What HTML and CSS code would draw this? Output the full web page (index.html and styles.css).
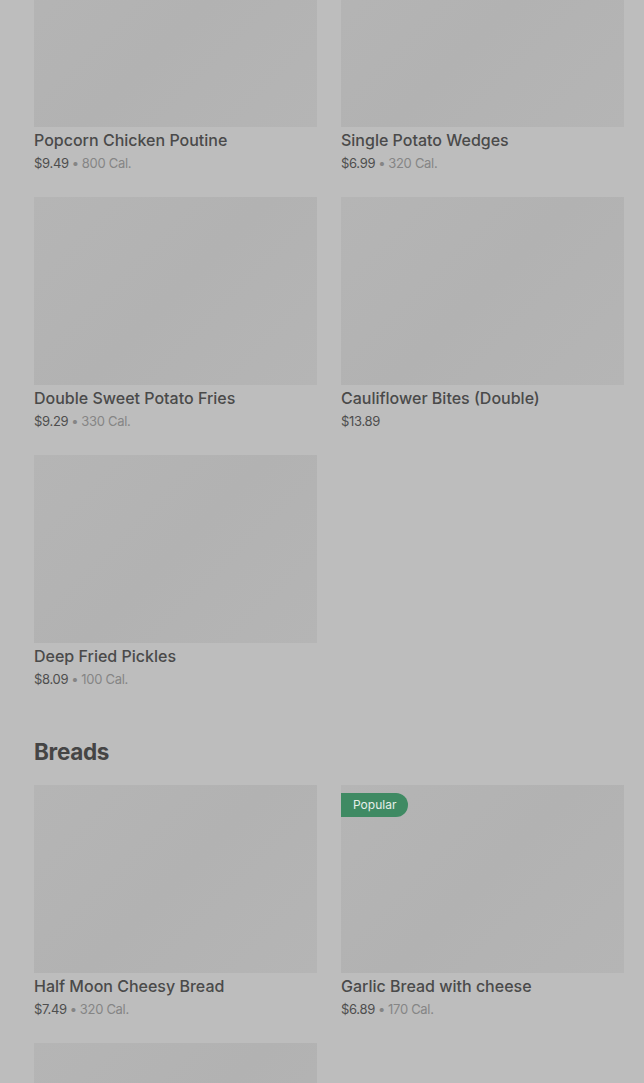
FILE: index.html
```html
<!DOCTYPE html>
<html lang="en">
<head>
    <meta charset="UTF-8">
    <meta name="viewport" content="width=device-width, initial-scale=1.0">
    <title>Menu</title>
    <link rel="stylesheet" href="styles.css">
</head>
<body>
    <div class="menu">
        <!-- sides -->
        <section class="section first">
            <div class="grid">
                <div class="item">
                    <div class="photo"></div>
                    <div class="name">Popcorn Chicken Poutine</div>
                    <div class="meta">$9.49<span class="dot">•</span><span class="cal">800 Cal.</span></div>
                </div>
                <div class="item">
                    <div class="photo"></div>
                    <div class="name">Single Potato Wedges</div>
                    <div class="meta">$6.99<span class="dot">•</span><span class="cal">320 Cal.</span></div>
                </div>
                <div class="item">
                    <div class="photo"></div>
                    <div class="name">Double Sweet Potato Fries</div>
                    <div class="meta">$9.29<span class="dot">•</span><span class="cal">330 Cal.</span></div>
                </div>
                <div class="item">
                    <div class="photo"></div>
                    <div class="name">Cauliflower Bites (Double)</div>
                    <div class="meta">$13.89</div>
                </div>
                <div class="item">
                    <div class="photo"></div>
                    <div class="name">Deep Fried Pickles</div>
                    <div class="meta">$8.09<span class="dot">•</span><span class="cal">100 Cal.</span></div>
                </div>
            </div>
        </section>

        <section class="section">
            <h2 class="title">Breads</h2>
            <div class="grid">
                <div class="item">
                    <div class="photo"></div>
                    <div class="name">Half Moon Cheesy Bread</div>
                    <div class="meta">$7.49<span class="dot">•</span><span class="cal">320 Cal.</span></div>
                </div>
                <div class="item">
                    <div class="photo">
                        <span class="badge">Popular</span>
                    </div>
                    <div class="name">Garlic Bread with cheese</div>
                    <div class="meta">$6.89<span class="dot">•</span><span class="cal">170 Cal.</span></div>
                </div>
                <div class="item">
                    <!-- rest of this card is below the fold -->
                    <div class="photo"></div>
                </div>
            </div>
        </section>
    </div>
</body>
</html>
```

FILE: styles.css
```css
*{
    margin: 0;
    padding: 0;
    box-sizing: border-box;
}
body{
    background: #bdbdbd;
    font-family: Inter, "Noto Sans", sans-serif;
    color: #484848;
    overflow: hidden;
}
.menu{
    padding: 0 20px 0 34px;
}
.section.first{
    /* page is scrolled a bit */
    margin-top: -61px;
}
.title{
    margin: 48px 0 17px;
    font-size: 22.5px;
    line-height: 32px;
    font-weight: 700;
    letter-spacing: -0.3px;
    color: #454545;
}
.grid{
    display: grid;
    grid-template-columns: 283px 283px;
    column-gap: 24px;
    row-gap: 25px;
}
.photo{
    position: relative;
    height: 188px;
    background: linear-gradient(135deg, #b5b5b5, #b2b2b2 50%, #b5b5b5);
}
.name{
    margin-top: 3px;
    font-size: 16px;
    line-height: 20px;
    font-weight: 500;
    color: #4a4a4a;
}
.meta{
    margin-top: 4px;
    font-size: 13px;
    line-height: 18px;
    letter-spacing: -0.3px;
    color: #4e4e4e;
}
.meta .dot{
    margin: 0 3px;
    color: #858585;
}
.meta .cal{
    color: #858585;
}
.badge{
    position: absolute;
    left: 0;
    top: 8px;
    height: 24px;
    padding: 0 12px;
    border-radius: 0 12px 12px 0;
    background: #3f8a63;
    color: #e6efe9;
    font-size: 12px;
    line-height: 24px;
}
```
